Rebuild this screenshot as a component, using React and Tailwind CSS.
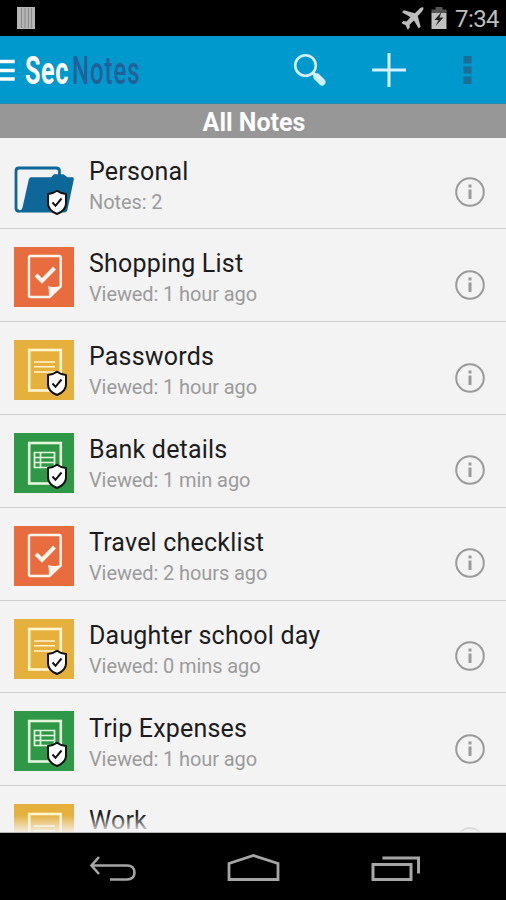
const notes = [
  { title: "Personal", meta: "Notes: 2", kind: "folder", secure: true },
  { title: "Shopping List", meta: "Viewed: 1 hour ago", kind: "checklist" },
  { title: "Passwords", meta: "Viewed: 1 hour ago", kind: "text", secure: true },
  { title: "Bank details", meta: "Viewed: 1 min ago", kind: "sheet", secure: true },
  { title: "Travel checklist", meta: "Viewed: 2 hours ago", kind: "checklist" },
  { title: "Daughter school day", meta: "Viewed: 0 mins ago", kind: "text", secure: true },
  { title: "Trip Expenses", meta: "Viewed: 1 hour ago", kind: "sheet", secure: true },
  { title: "Work", meta: "", kind: "text" },
];

const tileColors = {
  checklist: "#e96c3f",
  text: "#e5b03c",
  sheet: "#2f9847",
};

function Shield() {
  return (
    <g>
      <path
        d="M43 31.8C46 34 49 35 52 35V44.500C52 49.500 48 53 43 55C38 53 34 49.500 34 44.500V35C37 35 40 34 43 31.800Z"
        fill="#fff"
        stroke="#111"
        strokeWidth="2"
        strokeLinejoin="round"
      />
      <path d="M38.500 43.500L41.500 46.800L47.500 39.500" fill="none" stroke="#111" strokeWidth="2" />
    </g>
  );
}

function FolderArt() {
  return (
    <g>
      <path
        d="M5 52C2.500 52 2 51 2 49V12Q2 9 5 9H42Q45.500 9 45.500 12V17"
        fill="none"
        stroke="#0d6798"
        strokeWidth="2.800"
      />
      <path
        d="M14.800 20.500Q15.300 18.300 17.500 18.300H37L40 15.300H49.500L53.500 18.300H58Q60.300 18.300 59.800 20.500L53.500 50.500Q53 53.500 50 53.500H5Q2 53.500 2 51H6.500Q8 51 8.500 48.500Z"
        fill="#0d6798"
      />
    </g>
  );
}

function ChecklistArt() {
  return (
    <g fill="none" stroke="#fff5ec">
      <path d="M16.500 9H45Q46.700 9 46.700 11V39.500L35.500 50H16.500Q15 50 15 48.500V10.500Q15 9 16.500 9Z" strokeWidth="2.400" />
      <path d="M35 50.500C34.500 48 35.500 44 34 39C38 41 43 40 47 38.500Z" fill="#fff5ec" stroke="none" />
      <path d="M22 28L28 34L40.500 21" strokeWidth="4" />
    </g>
  );
}

function TextArt() {
  return (
    <g fill="none" stroke="#fff5cf">
      <rect x="15.200" y="10" width="31.600" height="40.500" strokeWidth="2.600" />
      <path d="M20 22H41M20 26.700H41M20 32H41" strokeWidth="1.600" />
    </g>
  );
}

function SheetArt() {
  return (
    <g fill="none" stroke="#e4f7dc">
      <rect x="15.200" y="10" width="31.600" height="40.500" strokeWidth="2.600" />
      <path d="M20.500 19.500H40.500V34.500H20.500ZM20.500 24.500H40.500M20.500 29.500H40.500M26.500 19.500V34.500" strokeWidth="1.700" />
    </g>
  );
}

function NoteIcon({ kind, secure }) {
  return (
    <svg viewBox="0 0 60 60" className={`h-[60px] w-[60px] shrink-0 ${kind === "folder" ? "mt-[7.500px]" : "mt-[2.500px]"}`}>
      {kind !== "folder" && <rect width="60" height="60" fill={tileColors[kind]} />}
      {kind === "folder" && <FolderArt />}
      {kind === "checklist" && <ChecklistArt />}
      {kind === "text" && <TextArt />}
      {kind === "sheet" && <SheetArt />}
      {secure && <Shield />}
    </svg>
  );
}

function InfoIcon() {
  return (
    <svg viewBox="0 0 32 32" className="mt-[24px] ml-auto h-8 w-8 shrink-0" fill="none" stroke="#9a9a9a">
      <circle cx="16" cy="16" r="13.800" strokeWidth="2" />
      <path d="M16 8.500V11.500M16 13.500V23" strokeWidth="3" />
    </svg>
  );
}

function NoteRow({ note }) {
  return (
    <li className="flex h-[92.83px] shrink-0 border-b border-[#cfcfcf] pt-[15.500px] pr-5 pl-[14.300px]">
      <NoteIcon kind={note.kind} secure={note.secure} />
      <div className="ml-[14.700px] whitespace-nowrap">
        <h2 className="mt-[4.700px] text-[25px] leading-[30px] tracking-[0.2px] text-[#1c1c1c]">{note.title}</h2>
        {note.meta && (
          <p className="mt-[3px] text-[20px] leading-6 tracking-[-0.1px] text-[#9b9b9b]">{note.meta}</p>
        )}
      </div>
      <InfoIcon />
    </li>
  );
}

function StatusBar() {
  return (
    <div className="flex h-9 shrink-0 items-center bg-black pr-[7px] pl-[17px] text-[#bdbdbd]">
      <svg viewBox="0 0 18 22" className="h-[22px] w-[18px]">
        <rect width="18" height="22" fill="#b5b5b5" />
        <path d="M4.500 1V21M8 1V21M11.500 1V21M14.500 1V21" stroke="#858585" strokeWidth="0.900" />
      </svg>
      <svg viewBox="0 0 24 24" className="ml-auto h-[23px] w-[23px]" fill="currentColor">
        <path d="M23.300 0.500C24 2.500 22 4.700 20.500 6.200L17.500 9.500L20.500 20.500L18.500 22.500L13.500 14.200L9 18.500L9.200 21.500L7 23.800L4.800 19L0.300 16.700L2.500 14.600L5.700 15L10 10.700L1 5.500L3 3.500L14.500 6.500L18 3C19.500 1.500 21.500 -0.200 23.300 0.500Z" />
      </svg>
      <svg viewBox="0 0 16 22" className="ml-[7px] h-[22px] w-4">
        <path d="M4.500 0H11.500V2.500H15.500V6H0.500V2.500H4.500Z" fill="#555" />
        <path d="M0.500 6H15.500V22H0.500Z" fill="#c0c0c0" />
        <path d="M10.500 5L3.500 13H7.500L4.500 19L12.500 10.500H8.500Z" fill="#222" />
      </svg>
      <span className="ml-2 pt-0.5 text-[24px] leading-8 tracking-[-0.600px]">7:34</span>
    </div>
  );
}

function ActionBar() {
  return (
    <header className="flex h-[68px] shrink-0 items-center border-b border-[#278bad] bg-[#0099cd]">
      <svg viewBox="0 0 15 24" className="h-6 w-[15px]" stroke="#fff" strokeWidth="3.500">
        <path d="M0 3.500H14.700M0 12.500H14.700M0 21H14.700" />
      </svg>
      <h1 className="ml-2.5 flex w-[115px] pt-0.5 text-[38px] leading-10 whitespace-nowrap">
        <span className="w-[47px] origin-left scale-x-[0.66] font-bold tracking-[1px] text-white">Sec</span>
        <span className="origin-left scale-x-[0.63] font-medium tracking-[1.5px] text-[#235f99]">Notes</span>
      </h1>
      <svg viewBox="0 0 34 34" className="ml-[153px] h-[34px] w-[34px]" fill="none" stroke="#d3f1fb">
        <circle cx="12.500" cy="12.500" r="10.300" strokeWidth="2.600" />
        <path d="M19.500 19.500L24 24" strokeWidth="3.500" />
        <path d="M24 24L29 29" strokeWidth="7" strokeLinecap="round" />
      </svg>
      <svg viewBox="0 0 34 34" className="ml-[45px] h-[34px] w-[34px]" stroke="#d3f1fb" strokeWidth="3">
        <path d="M17 0V34M0 17H34" />
      </svg>
      <svg viewBox="0 0 9 28" className="ml-[57px] h-7 w-[9px]" fill="#1b6f96">
        <path d="M0.500 0H8.500V7.500H0.500ZM0.500 10.300H8.500V17.800H0.500ZM0.500 20.500H8.500V28H0.500Z" />
      </svg>
    </header>
  );
}

function NavBar() {
  return (
    <nav className="flex h-[67px] shrink-0 items-center bg-black pt-[5px] pl-[88px]">
      <svg viewBox="0 0 50 30" className="h-[30px] w-[50px]" fill="none" stroke="#a5a5a5" strokeWidth="2.600">
        <path d="M11 3L3.500 11.500L11 20M4 11.500H39C44 11.500 46.500 14.500 46.500 18.500C46.500 22.500 44 25.500 39 25.500H22" />
      </svg>
      <svg viewBox="0 0 54 30" className="ml-[88px] h-[30px] w-[54px]" fill="none" stroke="#a5a5a5" strokeWidth="2.800">
        <path d="M3 25.500V9.500L27.500 1.500L52 9.500V25.500Z" />
      </svg>
      <svg viewBox="0 0 50 30" className="ml-[91px] h-[30px] w-[50px]" fill="none" stroke="#a5a5a5" strokeWidth="3">
        <path d="M2 10.500H40V25.500H2ZM11.500 4H47.500V19.500" />
      </svg>
    </nav>
  );
}

export default function App() {
  return (
    <div className="flex h-[900px] w-[506px] flex-col overflow-hidden bg-[#f3f3f3] font-[Roboto,sans-serif]">
      <StatusBar />
      <ActionBar />
      <div className="flex h-[34px] shrink-0 items-center justify-center bg-[#979797] pt-1 pl-0.5 text-[25px] leading-8 font-bold text-white">
        <span>All Notes</span>
      </div>
      <div className="relative min-h-0 flex-1 overflow-hidden">
        <ul className="-mt-[1.600px] flex flex-col">
          {notes.map((note) => (
            <NoteRow key={note.title} note={note} />
          ))}
        </ul>
        {/* fade at the lower edge of the scrolling list */}
        <div className="absolute inset-x-0 bottom-0 h-[18px] border-b border-[#b5b5b5] bg-linear-to-b from-[#f3f3f3]/0 to-[#f3f3f3]/90" />
      </div>
      <NavBar />
    </div>
  );
}
